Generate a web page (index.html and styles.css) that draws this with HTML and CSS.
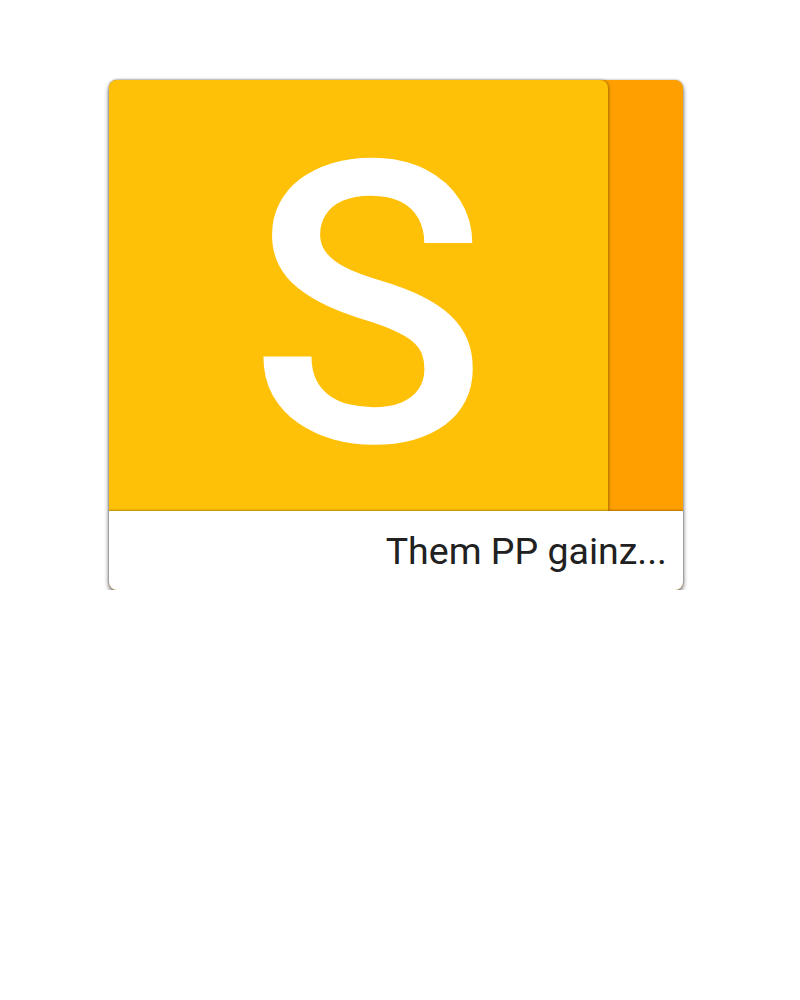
FILE: index.html
```html
<!DOCTYPE html>
<html>
<head>
<meta charset="utf-8">
<link rel="stylesheet" href="styles.css">
</head>
<body>
<div class="card">
  <div class="cover">
    <div class="face"><span class="letter">S</span></div>
  </div>
  <div class="caption">Them PP gainz...</div>
</div>
</body>
</html>
```
FILE: styles.css
```css
html, body {
  margin: 0;
  padding: 0;
  background: #ffffff;
}
body {
  padding: 80px 0 0 109px;
  font-family: Roboto, "Liberation Sans", sans-serif;
}
.card {
  width: 574px;
  height: 510px;
  border-radius: 8px;
  background: #ffa000;
  box-shadow: 0 3px 5px rgba(0,0,0,0.6), 0 0 2px rgba(0,0,0,0.3);
  display: flex;
  flex-direction: column;
}
.cover {
  height: 431px;
  display: flex;
  border-radius: 8px 8px 0 0;
}
.face {
  width: 499px;
  height: 100%;
  background: #ffc107;
  border-radius: 8px 8px 0 0;
  box-shadow: 1px 0 3px rgba(0,0,0,0.35);
  display: flex;
  align-items: center;
  justify-content: center;
  position: relative;
  z-index: 1;
}
.letter {
  color: #ffffff;
  font-size: 393px;
  font-weight: 500;
  line-height: 0.8;
  padding-left: 19px;
  margin-top: 24px;
}
.caption {
  flex: 1;
  background: #ffffff;
  border-radius: 0 0 8px 8px;
  box-shadow: 0 -1px 2px rgba(0,0,0,0.3);
  position: relative;
  z-index: 2;
  color: #212121;
  font-size: 37.5px;
  display: flex;
  align-items: center;
  justify-content: flex-end;
  padding-right: 16px;
}
```
